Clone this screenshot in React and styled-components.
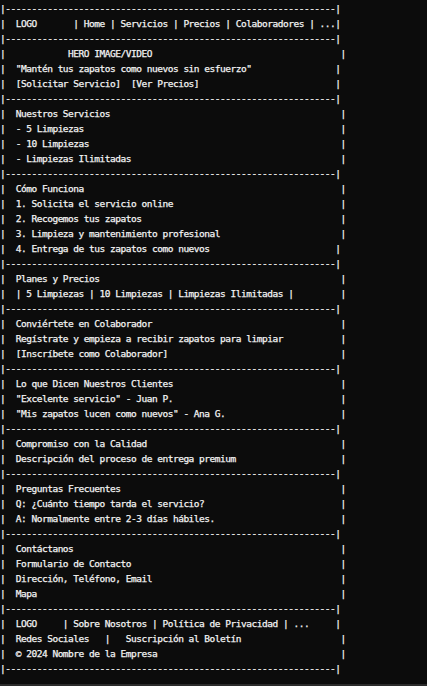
import React from 'react';
import styled, { createGlobalStyle } from 'styled-components';

const GlobalStyle = createGlobalStyle`
  html, body {
    margin: 0;
    padding: 0;
    background: #0c0c0c;
  }
`;

const sections = [
  [['  LOGO       | Home | Servicios | Precios | Colaboradores | ...', 65]],
  [
    ['            HERO IMAGE/VIDEO', 66],
    ['  "Mantén tus zapatos como nuevos sin esfuerzo"', 65],
    ['  [Solicitar Servicio]  [Ver Precios]', 65],
  ],
  [
    ['  Nuestros Servicios', 66],
    ['  - 5 Limpiezas', 66],
    ['  - 10 Limpiezas', 66],
    ['  - Limpiezas Ilimitadas', 66],
  ],
  [
    ['  Cómo Funciona', 66],
    ['  1. Solicita el servicio online', 66],
    ['  2. Recogemos tus zapatos', 66],
    ['  3. Limpieza y mantenimiento profesional', 66],
    ['  4. Entrega de tus zapatos como nuevos', 65],
  ],
  [
    ['  Planes y Precios', 66],
    ['  | 5 Limpiezas | 10 Limpiezas | Limpiezas Ilimitadas |', 66],
  ],
  [
    ['  Conviértete en Colaborador', 66],
    ['  Regístrate y empieza a recibir zapatos para limpiar', 66],
    ['  [Inscríbete como Colaborador]', 66],
  ],
  [
    ['  Lo que Dicen Nuestros Clientes', 66],
    ['  "Excelente servicio" - Juan P.', 66],
    ['  "Mis zapatos lucen como nuevos" - Ana G.', 66],
  ],
  [
    ['  Compromiso con la Calidad', 66],
    ['  Descripción del proceso de entrega premium', 66],
  ],
  [
    ['  Preguntas Frecuentes', 66],
    ['  Q: ¿Cuánto tiempo tarda el servicio?', 66],
    ['  A: Normalmente entre 2-3 días hábiles.', 66],
  ],
  [
    ['  Contáctanos', 66],
    ['  Formulario de Contacto', 66],
    ['  Dirección, Teléfono, Email', 66],
    ['  Mapa', 66],
  ],
  [
    ['  LOGO     | Sobre Nosotros | Política de Privacidad | ...', 65],
    ['  Redes Sociales   |   Suscripción al Boletín', 66],
    ['  © 2024 Nombre de la Empresa', 66],
  ],
];

// pads a line out to its column count and closes it with a border
const boxed = (text, width) => '|' + text.padEnd(width - 2) + '|';
const rule = '|' + '-'.repeat(63) + '|';

export default function App() {
  return (
    <Screen>
      <GlobalStyle />
      <Frame>
        <Rule>{rule}</Rule>
        {sections.map((rows, i) => (
          <Section key={i}>
            {rows.map(([text, width], j) => (
              <Line key={j}>{boxed(text, width)}</Line>
            ))}
            <Rule>{rule}</Rule>
          </Section>
        ))}
      </Frame>
    </Screen>
  );
}

const Screen = styled.div`
  min-height: 100vh;
  box-sizing: border-box;
  padding-top: 1px;
  background: #0c0c0c;
  border-bottom: 2px solid #2b2b2b;
`;

const Frame = styled.div`
  display: flex;
  flex-direction: column;
  font-family: 'DejaVu Sans Mono', 'Liberation Mono', monospace;
  font-size: 9.5px;
  letter-spacing: -0.48px;
  line-height: 15px;
  color: #f4f4f4;
  -webkit-text-stroke: 0.25px currentColor;
`;

const Section = styled.div`
  display: flex;
  flex-direction: column;
`;

const Line = styled.div`
  white-space: pre;
`;

const Rule = styled(Line)``;
